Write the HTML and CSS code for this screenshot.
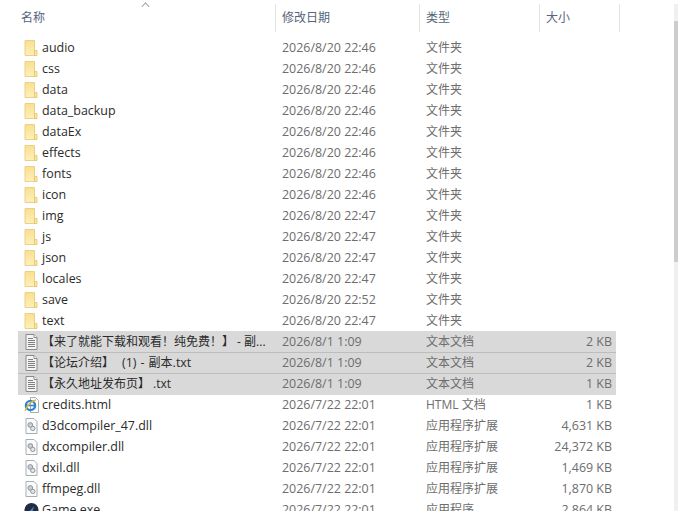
FILE: index.html
```html
<!DOCTYPE html>
<html lang="zh">
<head>
<meta charset="utf-8">
<title>文件列表</title>
<link rel="stylesheet" href="styles.css">
</head>
<body>
<svg class="defs" width="0" height="0" aria-hidden="true">
  <defs>
    <linearGradient id="fg" x1="0" y1="0" x2="0" y2="1">
      <stop offset="0" stop-color="#fadf90"/>
      <stop offset="1" stop-color="#fdf0bb"/>
    </linearGradient>
    <symbol id="folder" viewBox="0 0 14 16">
      <path d="M.5.5h9.5v15H.5z" fill="url(#fg)" stroke="#ecd084"/>
      <path d="M10 10.5h2.5v5H10z" fill="#fbe7a6" stroke="#e3c166" stroke-width=".8"/>
    </symbol>
    <symbol id="txt" viewBox="0 0 12 16">
      <path d="M.5.5h8l3 3v12H.5z" fill="#f4f4f4" stroke="#8a8a8a"/>
      <path d="M8.5.5v3h3" fill="#fff" stroke="#8a8a8a"/>
      <path d="M2.5 4.5h5M2.5 6.5h7M2.5 8.5h7M2.5 10.5h7M2.5 12.5h7" stroke="#7f7f7f"/>
    </symbol>
    <symbol id="dll" viewBox="0 0 12 16">
      <path d="M.5.5h8l3 3v12H.5z" fill="#fbfbfb" stroke="#a9aeb3"/>
      <circle cx="4.8" cy="7" r="2.4" fill="#c8ced3" stroke="#8f979e"/>
      <circle cx="7.3" cy="10.4" r="2.2" fill="#dfe4e8" stroke="#8f979e"/>
    </symbol>
    <symbol id="ie" viewBox="0 0 15 16">
      <path d="M6.5.5h5l3 3v12h-8z" fill="#fff" stroke="#a9aeb3"/>
      <circle cx="6.5" cy="8.5" r="4.6" fill="none" stroke="#2f86cf" stroke-width="2.4"/>
      <path d="M3 8.5h7" stroke="#2f86cf" stroke-width="1.6"/>
      <path d="M1 14C3 9 7 4 12 3" fill="none" stroke="#e2b53b" stroke-width="1.3"/>
    </symbol>
    <symbol id="game" viewBox="0 0 16 16">
      <circle cx="8" cy="8" r="7.5" fill="#1f2c44"/>
      <path d="M4 11l7-7-3 8z" fill="#4b86c8"/>
    </symbol>
  </defs>
</svg>
<main class="list">
  <header class="head">
    <div class="hcell first"><span class="sort"></span>名称</div>
    <div class="hcell">修改日期</div>
    <div class="hcell">类型</div>
    <div class="hcell">大小</div>
  </header>
  <ul class="rows">
    <li class="row"><span class="cell name"><svg class="icon"><use href="#folder"/></svg><span class="fname">audio</span></span><span class="cell">2026/8/20 22:46</span><span class="cell type">文件夹</span><span class="cell num"></span></li>
    <li class="row"><span class="cell name"><svg class="icon"><use href="#folder"/></svg><span class="fname">css</span></span><span class="cell">2026/8/20 22:46</span><span class="cell type">文件夹</span><span class="cell num"></span></li>
    <li class="row"><span class="cell name"><svg class="icon"><use href="#folder"/></svg><span class="fname">data</span></span><span class="cell">2026/8/20 22:46</span><span class="cell type">文件夹</span><span class="cell num"></span></li>
    <li class="row"><span class="cell name"><svg class="icon"><use href="#folder"/></svg><span class="fname">data_backup</span></span><span class="cell">2026/8/20 22:46</span><span class="cell type">文件夹</span><span class="cell num"></span></li>
    <li class="row"><span class="cell name"><svg class="icon"><use href="#folder"/></svg><span class="fname">dataEx</span></span><span class="cell">2026/8/20 22:46</span><span class="cell type">文件夹</span><span class="cell num"></span></li>
    <li class="row"><span class="cell name"><svg class="icon"><use href="#folder"/></svg><span class="fname">effects</span></span><span class="cell">2026/8/20 22:46</span><span class="cell type">文件夹</span><span class="cell num"></span></li>
    <li class="row"><span class="cell name"><svg class="icon"><use href="#folder"/></svg><span class="fname">fonts</span></span><span class="cell">2026/8/20 22:46</span><span class="cell type">文件夹</span><span class="cell num"></span></li>
    <li class="row"><span class="cell name"><svg class="icon"><use href="#folder"/></svg><span class="fname">icon</span></span><span class="cell">2026/8/20 22:46</span><span class="cell type">文件夹</span><span class="cell num"></span></li>
    <li class="row"><span class="cell name"><svg class="icon"><use href="#folder"/></svg><span class="fname">img</span></span><span class="cell">2026/8/20 22:47</span><span class="cell type">文件夹</span><span class="cell num"></span></li>
    <li class="row"><span class="cell name"><svg class="icon"><use href="#folder"/></svg><span class="fname">js</span></span><span class="cell">2026/8/20 22:47</span><span class="cell type">文件夹</span><span class="cell num"></span></li>
    <li class="row"><span class="cell name"><svg class="icon"><use href="#folder"/></svg><span class="fname">json</span></span><span class="cell">2026/8/20 22:47</span><span class="cell type">文件夹</span><span class="cell num"></span></li>
    <li class="row"><span class="cell name"><svg class="icon"><use href="#folder"/></svg><span class="fname">locales</span></span><span class="cell">2026/8/20 22:47</span><span class="cell type">文件夹</span><span class="cell num"></span></li>
    <li class="row"><span class="cell name"><svg class="icon"><use href="#folder"/></svg><span class="fname">save</span></span><span class="cell">2026/8/20 22:52</span><span class="cell type">文件夹</span><span class="cell num"></span></li>
    <li class="row"><span class="cell name"><svg class="icon"><use href="#folder"/></svg><span class="fname">text</span></span><span class="cell">2026/8/20 22:47</span><span class="cell type">文件夹</span><span class="cell num"></span></li>
    <li class="row sel start"><span class="cell name"><svg class="icon"><use href="#txt"/></svg><span class="fname cjk">【来了就能下载和观看！纯免费！】 - 副...</span></span><span class="cell">2026/8/1 1:09</span><span class="cell type">文本文档</span><span class="cell num">2 KB</span></li>
    <li class="row sel"><span class="cell name"><svg class="icon"><use href="#txt"/></svg><span class="fname cjk">【论坛介绍】<span class="lat">  (1) - </span>副本<span class="lat">.txt</span></span></span><span class="cell">2026/8/1 1:09</span><span class="cell type">文本文档</span><span class="cell num">2 KB</span></li>
    <li class="row sel end"><span class="cell name"><svg class="icon"><use href="#txt"/></svg><span class="fname cjk">【永久地址发布页】 .txt</span></span><span class="cell">2026/8/1 1:09</span><span class="cell type">文本文档</span><span class="cell num">1 KB</span></li>
    <li class="row"><span class="cell name"><svg class="icon"><use href="#ie"/></svg><span class="fname">credits.html</span></span><span class="cell">2026/7/22 22:01</span><span class="cell type">HTML 文档</span><span class="cell num">1 KB</span></li>
    <li class="row"><span class="cell name"><svg class="icon"><use href="#dll"/></svg><span class="fname">d3dcompiler_47.dll</span></span><span class="cell">2026/7/22 22:01</span><span class="cell type">应用程序扩展</span><span class="cell num">4,631 KB</span></li>
    <li class="row"><span class="cell name"><svg class="icon"><use href="#dll"/></svg><span class="fname">dxcompiler.dll</span></span><span class="cell">2026/7/22 22:01</span><span class="cell type">应用程序扩展</span><span class="cell num">24,372 KB</span></li>
    <li class="row"><span class="cell name"><svg class="icon"><use href="#dll"/></svg><span class="fname">dxil.dll</span></span><span class="cell">2026/7/22 22:01</span><span class="cell type">应用程序扩展</span><span class="cell num">1,469 KB</span></li>
    <li class="row"><span class="cell name"><svg class="icon"><use href="#dll"/></svg><span class="fname">ffmpeg.dll</span></span><span class="cell">2026/7/22 22:01</span><span class="cell type">应用程序扩展</span><span class="cell num">1,870 KB</span></li>
    <li class="row"><span class="cell name"><svg class="icon"><use href="#game"/></svg><span class="fname">Game.exe</span></span><span class="cell">2026/7/22 22:01</span><span class="cell type">应用程序</span><span class="cell num">2,864 KB</span></li>
  </ul>
  <div class="scrollbar"><div class="thumb"></div></div>
</main>
</body>
</html>
```
FILE: styles.css
```css
html, body {
  margin: 0;
  height: 100%;
  background: #fff;
  overflow: hidden;
}
.defs { position: absolute; }
.list {
  height: 511px;
  box-sizing: border-box;
  padding-top: 4px;
  padding-left: 18px;
  overflow: hidden;
  position: relative;
  font-family: "Open Sans", "Noto Sans CJK SC", sans-serif;
  font-size: 12px;
  color: #6d6d6d;
}
.head {
  display: grid;
  grid-template-columns: 258px 144px 120px 80px;
  height: 27px;
  margin-bottom: 6px;
  color: #56657a;
}
.hcell {
  position: relative;
  padding-left: 6px;
  line-height: 28px;
  border-right: 1px solid #e5e5e5;
  box-sizing: border-box;
}
.first { padding-left: 3px; }
.sort {
  position: absolute;
  left: 124px;
  top: -1px;
  width: 6px;
  height: 6px;
  border-left: 1px solid #888;
  border-top: 1px solid #888;
  transform: rotate(45deg) scale(.8);
}
.rows {
  list-style: none;
  margin: 0;
  padding: 0;
  width: 598px;
}
.row {
  display: grid;
  grid-template-columns: 257px 144px 120px 77px;
  height: 21px;
  line-height: 21px;
  font-size: 12.45px;
  white-space: pre;
}
.sel {
  background: #d9d9d9;
  box-shadow: inset 0 1px 0 #bdbdbd;
}
.sel.start { box-shadow: none; }
.sel.end { box-shadow: inset 0 1px 0 #bdbdbd, 0 1px 0 #d9d9d9; }
.cell {
  padding-left: 7px;
  display: block;
}
.type { font-size: 12px; }
.name {
  display: flex;
  align-items: center;
  gap: 3px;
  padding-left: 6px;
  color: #2b2b2b;
}
.cjk { font-size: 12px; }
.lat {
  font-size: 12.45px;
  word-spacing: .8px;
}
.icon {
  width: 15px;
  height: 16px;
  flex: none;
}
.num {
  text-align: right;
  padding: 0 4px 0 0;
}
.scrollbar {
  position: absolute;
  top: 4px;
  right: 0;
  bottom: 0;
  width: 4px;
  background: #f0f0f0;
}
.thumb {
  margin-top: 17px;
  height: 241px;
  background: #cdcdcd;
}
```
